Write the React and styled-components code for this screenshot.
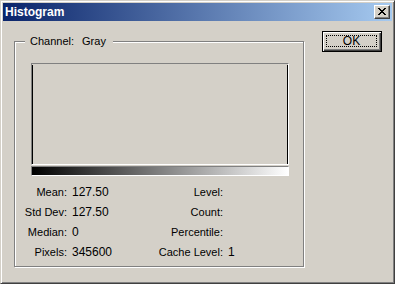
import React from 'react';
import styled, { createGlobalStyle } from 'styled-components';

const Global = createGlobalStyle`
  html, body { margin: 0; padding: 0; background: #d4d0c8; }
  body { font-family: "Liberation Sans", Arial, sans-serif; color: #000; }
`;

const Window = styled.div`
  box-sizing: border-box;
  width: 395px;
  height: 284px;
  background: #d4d0c8;
  border: 1px solid;
  border-color: #d4d0c8 #404040 #404040 #d4d0c8;
  box-shadow: inset 1px 1px 0 #fff, inset -1px -1px 0 #808080;
  padding: 2px;
  display: flex;
  flex-direction: column;
`;

const TitleBar = styled.div`
  height: 18px;
  flex: none;
  background: linear-gradient(to right, #0a246a, #a6caf0);
  display: flex;
  align-items: center;
  justify-content: space-between;
  padding: 0 2px;
`;

const Title = styled.span`
  color: #fff;
  font-weight: bold;
  font-size: 12px;
  line-height: 18px;
  padding-left: 0;
`;

const CloseButton = styled.div`
  box-sizing: border-box;
  width: 16px;
  height: 14px;
  background: #d4d0c8;
  border: 1px solid;
  border-color: #fff #404040 #404040 #fff;
  box-shadow: inset -1px -1px 0 #808080;
  display: flex;
  align-items: center;
  justify-content: center;
  padding: 0 1px 1px 0;
`;

const Body = styled.div`
  display: flex;
  align-items: flex-start;
  padding: 10px 0 0 11px;
`;

const GroupBox = styled.div`
  position: relative;
  box-sizing: border-box;
  width: 290px;
  height: 226px;
  margin-top: 10px;
  border: 1px solid #808080;
  box-shadow: 1px 1px 0 #fff, inset 1px 1px 0 #fff;
  padding-top: 21px;
`;

const Legend = styled.div`
  position: absolute;
  top: -7px;
  left: 10px;
  height: 13px;
  line-height: 13px;
  font-size: 11px;
  padding: 0 7px 0 5px;
  background: #d4d0c8;
  display: flex;
  gap: 8px;
`;

const Plot = styled.div`
  box-sizing: border-box;
  width: 258px;
  height: 102px;
  margin-left: 16px;
  border: 1px solid;
  border-color: #808080 #fff #fff #808080;
  display: flex;
  justify-content: space-between;
  padding-top: 1px;
`;

const Bar = styled.div`
  width: 1px;
  background: #000;
`;

const Ramp = styled.div`
  box-sizing: border-box;
  width: 258px;
  height: 10px;
  margin: 1px 0 0 16px;
  border: 1px solid;
  border-color: #808080 #fff #fff #808080;
  background: linear-gradient(to right, #000, #fff);
`;

const Stats = styled.div`
  display: grid;
  grid-template-columns: 52px 83px 73px auto;
  grid-auto-rows: 20px;
  margin-top: 6px;
  line-height: 20px;
`;

const Label = styled.span`
  font-size: 11px;
  text-align: right;
  white-space: nowrap;
`;

const Value = styled.span`
  font-size: 12px;
  padding-left: 5px;
  white-space: nowrap;
`;

const OkButton = styled.div`
  box-sizing: border-box;
  width: 60px;
  height: 21px;
  margin-left: 18px;
  border: 1px solid #000;
  background: #d4d0c8;
  box-shadow: inset 1px 1px 0 #fff, inset -1px -1px 0 #404040, inset -2px -2px 0 #808080;
  padding: 3px 4px 4px 3px;
  display: flex;
`;

const Focus = styled.div`
  flex: 1;
  border: 1px dotted #000;
  display: flex;
  align-items: center;
  justify-content: center;
  font-size: 12px;
`;

const CloseGlyph = () => (
  <svg width="8" height="7" viewBox="0 0 8 7" shapeRendering="crispEdges">
    <path
      fill="#000"
      d="M0 0h2v1H0zM6 0h2v1H6zM1 1h2v1H1zM5 1h2v1H5zM2 2h4v1H2zM3 3h2v1H3zM2 4h4v1H2zM1 5h2v1H1zM5 5h2v1H5zM0 6h2v1H0zM6 6h2v1H6z"
    />
  </svg>
);

const stats = [
  ['Mean:', '127.50', 'Level:', ''],
  ['Std Dev:', '127.50', 'Count:', ''],
  ['Median:', '0', 'Percentile:', ''],
  ['Pixels:', '345600', 'Cache Level:', '1'],
];

export default function App() {
  return (
    <>
      <Global />
      <Window>
        <TitleBar>
          <Title>Histogram</Title>
          <CloseButton>
            <CloseGlyph />
          </CloseButton>
        </TitleBar>
        <Body>
          <GroupBox>
            <Legend>
              <span>Channel:</span>
              <span>Gray</span>
            </Legend>
            <Plot>
              <Bar />
              <Bar />
            </Plot>
            <Ramp />
            <Stats>
              {stats.map(([l1, v1, l2, v2]) => (
                <React.Fragment key={l1}>
                  <Label>{l1}</Label>
                  <Value>{v1}</Value>
                  <Label>{l2}</Label>
                  <Value>{v2}</Value>
                </React.Fragment>
              ))}
            </Stats>
          </GroupBox>
          <OkButton>
            <Focus>OK</Focus>
          </OkButton>
        </Body>
      </Window>
    </>
  );
}
